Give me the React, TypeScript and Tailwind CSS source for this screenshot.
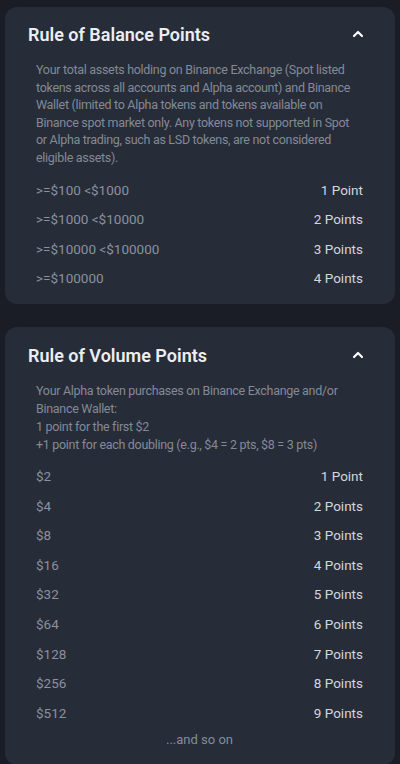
import { ChevronUp } from "lucide-react";

type Row = { amount: string; points: string };

const balanceRows: Row[] = [
  { amount: ">=$100 <$1000", points: "1 Point" },
  { amount: ">=$1000 <$10000", points: "2 Points" },
  { amount: ">=$10000 <$100000", points: "3 Points" },
  { amount: ">=$100000", points: "4 Points" },
];

const volumeRows: Row[] = [
  { amount: "$2", points: "1 Point" },
  { amount: "$4", points: "2 Points" },
  { amount: "$8", points: "3 Points" },
  { amount: "$16", points: "4 Points" },
  { amount: "$32", points: "5 Points" },
  { amount: "$64", points: "6 Points" },
  { amount: "$128", points: "7 Points" },
  { amount: "$256", points: "8 Points" },
  { amount: "$512", points: "9 Points" },
];

function RuleCard({
  title,
  children,
  rows,
  footer,
  className,
  descClass,
}: {
  title: string;
  children: React.ReactNode;
  rows: Row[];
  footer?: string;
  className?: string;
  descClass?: string;
}) {
  return (
    <div className={`mx-[5px] rounded-[12px] bg-[#272c39] px-[23px] ${className ?? ""}`}>
      <div className="flex h-[24px] items-center justify-between">
        <h2 className="text-[18px] font-semibold text-[#eceef1]">{title}</h2>
        <ChevronUp className="mr-[6px] h-[16px] w-[16px] text-white" strokeWidth={3.2} />
      </div>
      <div className="pl-[8px] pr-[9px]">
        <p className={`mt-[15px] pr-[5px] text-[12.5px] tracking-[-0.3px] text-[#848a95] ${descClass ?? ""}`}>
          {children}
        </p>
        <div>
          {rows.map((r) => (
            <div key={r.amount} className="flex h-[29.6px] items-center justify-between text-[13.5px]">
              <span className="text-[#8c919b]">{r.amount}</span>
              <span className="text-[#d3d6db]">{r.points}</span>
            </div>
          ))}
        </div>
        {footer && (
          <div className="mt-[1px] text-center text-[13px] leading-[22px] text-[#868b95]">{footer}</div>
        )}
      </div>
    </div>
  );
}

export default function App() {
  return (
    <div
      className="h-[764px] w-[400px] overflow-hidden bg-[#1a1d25] pt-[7px]"
      style={{ fontFamily: "Roboto, 'Noto Sans', sans-serif" }}
    >
      <RuleCard
        title="Rule of Balance Points"
        rows={balanceRows}
        className="pt-[15px] pb-[11px]"
        descClass="leading-[17.5px] mb-[9px]"
      >
        Your total assets holding on Binance Exchange (Spot listed tokens across all accounts and Alpha
        account) and Binance Wallet (limited to Alpha tokens and tokens available on Binance spot market
        only. Any tokens not supported in Spot or Alpha trading, such as LSD tokens, are not considered
        eligible assets).
      </RuleCard>
      <RuleCard
        title="Rule of Volume Points"
        rows={volumeRows}
        footer="...and so on"
        className="mt-[23px] pt-[16px] pb-[14px]"
        descClass="leading-[18px] mb-[7px]"
      >
        Your Alpha token purchases on Binance Exchange and/or Binance Wallet:
        <br />1 point for the first $2
        <br />
        +1 point for each doubling (e.g., $4 = 2 pts, $8 = 3 pts)
      </RuleCard>
    </div>
  );
}
